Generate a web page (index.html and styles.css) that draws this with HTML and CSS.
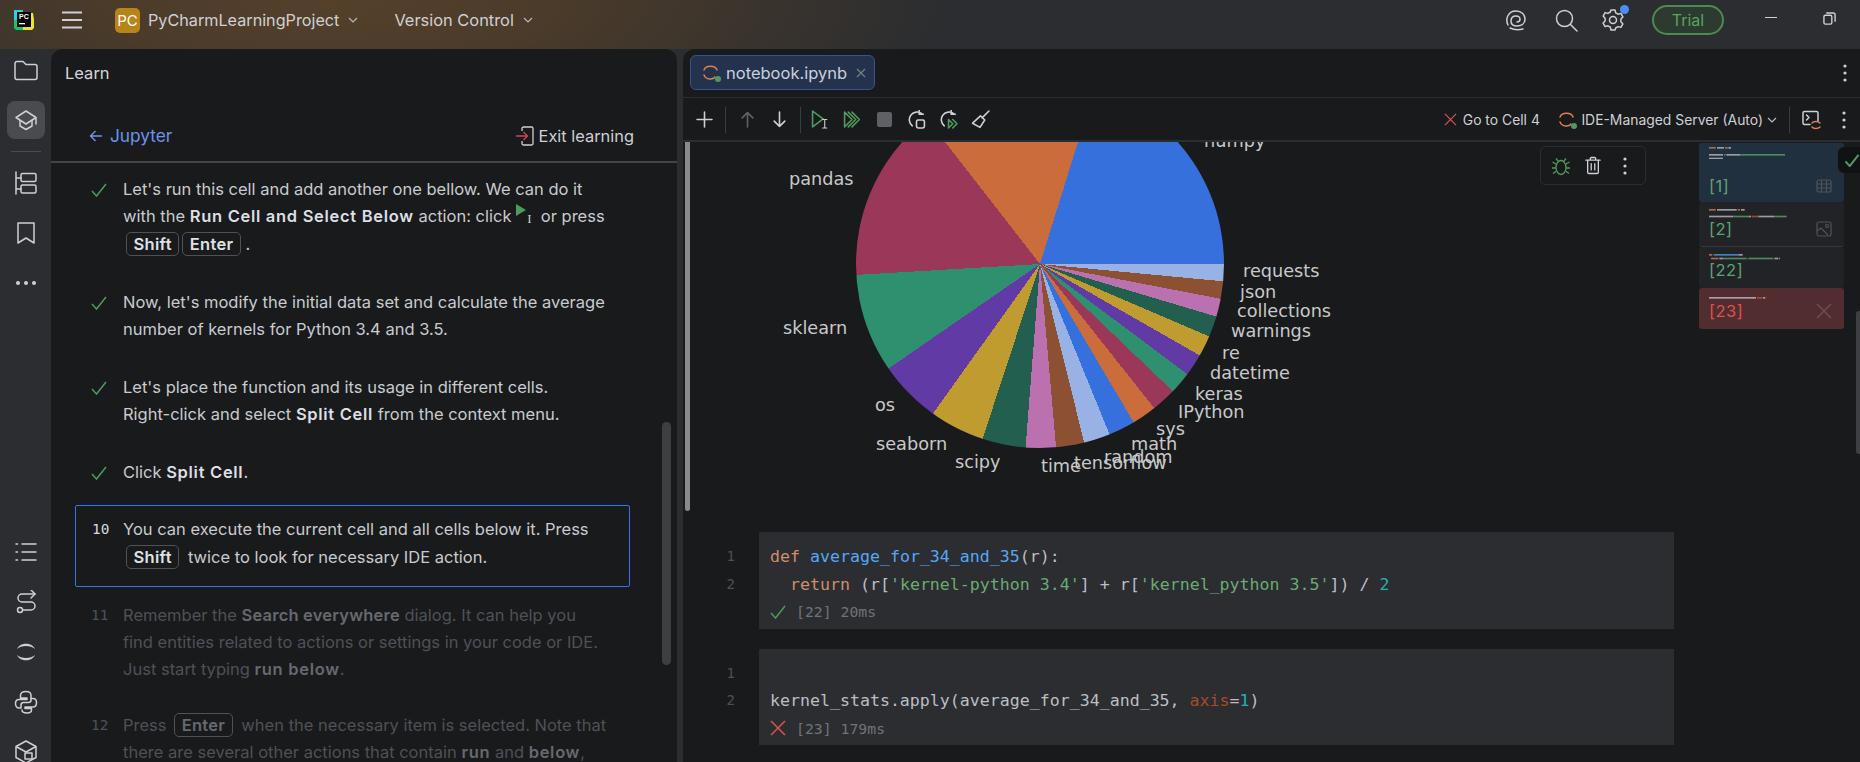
FILE: index.html
```html
<!DOCTYPE html>
<html lang="en">
<head>
<meta charset="utf-8">
<title>PyCharm Learn</title>
<link rel="stylesheet" href="styles.css">
</head>
<body>
<div class="app">
  <header class="titlebar">
    <svg class="logo" viewBox="0 0 20 20"><path d="M0 0h9v4H4v6H0z" fill="#21d7e0"/><path d="M0 10h4v6h5v4H2l-2-2z" fill="#18c36a"/><path d="M9 16h7v-6h4v8l-2 2H9z" fill="#e7e339"/><path d="M16 3h3l1 7h-4z" fill="#f5e62f"/><rect x="3" y="2" width="14" height="15" fill="#000"/><text x="5" y="9" class="logo-text">PC</text><rect x="5" y="13" width="6" height="1.3" fill="#fff"/></svg>
    <svg class="hamburger" viewBox="0 0 20 18"><path d="M0 1.5h20M0 9h20M0 16.5h20"/></svg>
    <span class="project-badge">PC</span>
    <span class="title-item">PyCharmLearningProject</span>
    <svg class="chev" viewBox="0 0 12 12"><path d="M2 4l4 4 4-4"/></svg>
    <span class="title-item vcs">Version Control</span>
    <svg class="chev" viewBox="0 0 12 12"><path d="M2 4l4 4 4-4"/></svg>
    <div class="title-right">
      <svg class="ico ai" viewBox="0 0 24 24"><path d="M4 17C1 11 4 3 12 3c6 0 9 4 9 8 0 5-4 7-8 7-4 0-6-2-6-5 0-3 2-5 5-5 3 0 4 2 4 3 0 2-1 3-3 3M6 20c4 2 9 2 13 1"/></svg>
      <svg class="ico search" viewBox="0 0 24 24"><circle cx="10.5" cy="10.5" r="8"/><path d="M16.5 16.5L23 23"/></svg>
      <span class="gear-wrap">
        <svg class="ico gear" viewBox="0 0 24 24"><path d="M10 2h4l.7 2.8 2.4 1.4 2.8-.8 2 3.5-2 2.1v2.8l2 2.1-2 3.5-2.8-.8-2.4 1.4L14 22h-4l-.7-2.8-2.4-1.4-2.8.8-2-3.5 2-2.1v-2.8l-2-2.1 2-3.5 2.8.8 2.4-1.4z"/><circle cx="12" cy="12" r="3.5"/></svg>
        <i class="gear-dot"></i>
      </span>
      <span class="trial">Trial</span>
      <i class="win-min"></i>
      <svg class="ico win-restore" viewBox="0 0 14 14"><rect x="1" y="3.5" width="8.5" height="9.5" rx="1.5"/><path d="M4 1h7a2 2 0 0 1 2 2v7"/></svg>
    </div>
  </header>

  <div class="workspace">
    <nav class="stripe">
      <div class="stripe-group">
        <span class="slot"><svg class="ico s-ico" viewBox="0 0 24 24"><path d="M1 5.5a2 2 0 0 1 2-2h6l3 3h9a2 2 0 0 1 2 2v11a2 2 0 0 1-2 2H3a2 2 0 0 1-2-2z"/></svg></span>
        <span class="slot active"><svg class="ico s-ico" viewBox="0 0 24 24"><path d="M12 3l10 6.5L12 16 2 9.500z"/><path d="M6 12.500v5.500l6 3.500 6-3.500v-5.500"/><path d="M22 10v6"/></svg></span>
        <i class="stripe-sep"></i>
        <span class="slot"><svg class="ico s-ico" viewBox="0 0 24 24"><path d="M2 1v22M2 7h5M2 18h5"/><rect x="7" y="2.500" width="15" height="8" rx="1.500"/><rect x="7" y="14" width="15" height="8" rx="1.500"/></svg></span>
        <span class="slot"><svg class="ico s-ico" viewBox="0 0 24 24"><path d="M4 2h16v20l-8-5-8 5z"/></svg></span>
        <span class="slot"><svg class="s-ico" viewBox="0 0 24 24"><circle cx="4" cy="12" r="2" class="dot"/><circle cx="12" cy="12" r="2" class="dot"/><circle cx="20" cy="12" r="2" class="dot"/></svg></span>
      </div>
      <div class="stripe-group bottom">
        <span class="slot"><svg class="ico s-ico" viewBox="0 0 24 24"><path d="M8 4h14M8 12h14M8 20h14M2 4h1.500M2 12h1.500M2 20h1.500"/></svg></span>
        <span class="slot"><svg class="ico s-ico" viewBox="0 0 24 24"><path d="M21 4H8a4 4 0 0 0 0 8h9a4 4 0 0 1 0 8H9"/><path d="M17 0l4 4-4 4"/><circle cx="6" cy="20" r="2.500"/></svg></span>
        <span class="slot"><svg class="s-ico" viewBox="0 0 24 24"><path class="dot" d="M3 9C6 2 18 2 21 9 17 5 7 5 3 9zM3 15c3 7 15 7 18 0-4 4-14 4-18 0z"/></svg></span>
        <span class="slot"><svg class="ico s-ico" viewBox="0 0 24 24"><path d="M12 1.500c-4 0-5.500 1.500-5.500 4V8H13v1.500H5C2.500 9.500 1.500 11 1.500 13.500S3 18 5 18h2v-3c0-1.500 1-2.500 2.500-2.500h5c1.500 0 2.500-1 2.500-2.500V5.500c0-2.500-1.500-4-5-4z"/><path d="M17 8.500h2c2.500 0 3.500 1.500 3.500 4s-1 4.500-3.500 4.500h-8v1.500h6.500V20c0 2.500-1.500 3-4.500 3s-5-1-5-3"/></svg></span>
        <span class="slot"><svg class="ico s-ico" viewBox="0 0 24 24"><path d="M12 1l10 5.500v11L12 23 2 17.500v-11zM2 6.500L12 12l10-5.500"/><path d="M11 13h7v6h-7z"/></svg></span>
      </div>
    </nav>

    <aside class="learn">
      <div class="learn-head">Learn</div>
      <div class="learn-nav">
        <svg class="back" viewBox="0 0 14 14"><path d="M13 7H1.500M6.500 2l-5 5 5 5"/></svg>
        <span class="jup">Jupyter</span>
        <svg class="exit" viewBox="0 0 18 20"><path class="exit-door" d="M6 5V2.500A1.500 1.500 0 0 1 7.500 1h8A1.500 1.500 0 0 1 17 2.500v15a1.500 1.500 0 0 1-1.500 1.500h-8A1.500 1.500 0 0 1 6 17.500V15"/><path class="exit-arrow" d="M0 10h11M7.500 6l4 4-4 4"/></svg>
        <span class="exit-label">Exit learning</span>
      </div>
      <ol class="steps">
        <li class="step">
          <svg class="check" viewBox="0 0 16 14"><path d="M1 8l4.500 5L15 1"/></svg>
          <p>Let's run this cell and add another one bellow. We can do it with the <b>Run Cell and Select Below</b> action: click <span class="inline-run"><i class="play"></i><i class="cursor">I</i></span> or press <kbd>Shift</kbd><kbd>Enter</kbd> .</p>
        </li>
        <li class="step">
          <svg class="check" viewBox="0 0 16 14"><path d="M1 8l4.500 5L15 1"/></svg>
          <p>Now, let's modify the initial data set and calculate the average number of kernels for Python 3.4 and 3.5.</p>
        </li>
        <li class="step">
          <svg class="check" viewBox="0 0 16 14"><path d="M1 8l4.500 5L15 1"/></svg>
          <p>Let's place the function and its usage in different cells.<br>Right-click and select <b>Split Cell</b> from the context menu.</p>
        </li>
        <li class="step last-done">
          <svg class="check" viewBox="0 0 16 14"><path d="M1 8l4.500 5L15 1"/></svg>
          <p>Click <b>Split Cell</b>.</p>
        </li>
        <li class="step current">
          <span class="num">10</span>
          <p>You can execute the current cell and all cells below it. Press <kbd>Shift</kbd> <span class="after-kbd">twice to look for necessary IDE action.</span></p>
        </li>
        <li class="step dim">
          <span class="num">11</span>
          <p>Remember the <b class="narrow">Search everywhere</b> dialog. It can help you<br>find entities related to actions or settings in your code or IDE.<br>Just start typing <b>run below</b>.</p>
        </li>
        <li class="step dim">
          <span class="num">12</span>
          <p>Press <kbd>Enter</kbd> <span class="after-kbd">when the necessary item is selected. Note that</span> there are several other actions that contain <b>run</b> and <b>below</b>,</p>
        </li>
      </ol>
      <i class="learn-scroll"></i>
    </aside>

    <main class="editor">
      <div class="tabs">
        <div class="tab">
          <svg class="jup-ico" viewBox="0 0 20 20"><path class="arc" d="M2 7C4 2 13 2 15 7M2 12c2 5 9 5 11 2"/><circle cx="16" cy="16" r="3" class="green"/></svg>
          <span>notebook.ipynb</span>
          <svg class="tab-x" viewBox="0 0 10 10"><path d="M1 1l8 8M9 1l-8 8"/></svg>
        </div>
        <svg class="vdots tabs-dots" viewBox="0 0 4 18"><circle cx="2" cy="2" r="1.600"/><circle cx="2" cy="9" r="1.600"/><circle cx="2" cy="16" r="1.600"/></svg>
      </div>
      <div class="toolbar">
        <span class="tool"><svg class="ico t-ico sm" viewBox="0 0 16 16"><path d="M8 1v14M1 8h14"/></svg></span>
        <i class="tool-sep"></i>
        <span class="tool"><svg class="ico t-ico sm off" viewBox="0 0 16 16"><path d="M8 15V1.500M3 6.500l5-5 5 5"/></svg></span>
        <span class="tool"><svg class="ico t-ico sm" viewBox="0 0 16 16"><path d="M8 1v13.500M3 9.500l5 5 5-5"/></svg></span>
        <i class="tool-sep tight"></i>
        <span class="tool"><svg class="ico t-ico g" viewBox="0 0 18 18"><path d="M1.500 1v15l10-7.500z"/><path class="wh" d="M13 9v8M11 9h4M11 17h4"/></svg></span>
        <span class="tool"><svg class="ico t-ico g" viewBox="0 0 18 18"><path d="M1.500 2v14l7-7zM8.500 2l7 7-7 7M5 2l7 7-7 7"/></svg></span>
        <span class="tool"><i class="stop"></i></span>
        <span class="tool"><svg class="ico t-ico" viewBox="0 0 18 18"><path d="M14 3.500A7 7 0 1 0 5 15M11.500 0v4h4"/><rect x="9" y="9.500" width="7.500" height="7.500" rx="1.500"/></svg></span>
        <span class="tool"><svg class="ico t-ico" viewBox="0 0 18 18"><path d="M14 3.500A7 7 0 1 0 5 15M11.500 0v4h4"/><path class="gs" d="M9 9l4 4-4 4zM13 9l4 4-4 4"/></svg></span>
        <span class="tool"><svg class="ico t-ico" viewBox="0 0 18 18"><path d="M17 1l-6.500 6.500M9 5.500l4 4-4.500 7-7-4z"/></svg></span>
        <div class="tool-right">
          <svg class="err-x" viewBox="0 0 14 14"><path d="M1 1l12 12M13 1L1 13"/></svg>
          <span class="goto">Go to Cell 4</span>
          <svg class="jup-ico srv" viewBox="0 0 20 20"><path class="arc" d="M2 7C4 2 13 2 15 7M2 12c2 5 9 5 11 2"/><circle cx="16" cy="16" r="3" class="green"/></svg>
          <span class="server">IDE-Managed Server (Auto)</span>
          <svg class="chev srv-chev" viewBox="0 0 12 12"><path d="M2 4l4 4 4-4"/></svg>
          <i class="tool-sep end"></i>
          <svg class="ico term" viewBox="0 0 20 20"><path d="M16 11V3a1.500 1.500 0 0 0-1.500-1.500H2.500A1.500 1.500 0 0 0 1 3v10a1.500 1.500 0 0 0 1.500 1.500H8M4.500 5l2.500 2.500L4.500 10"/><path class="arc" d="M10 13c1.500-2 6-2 8 0M10 17c1.500 2 6 2 8 0"/></svg>
          <svg class="vdots" viewBox="0 0 4 18"><circle cx="2" cy="2" r="1.600"/><circle cx="2" cy="9" r="1.600"/><circle cx="2" cy="16" r="1.600"/></svg>
        </div>
      </div>
      <div class="notebook">
        <i class="cell-strip"></i>
        <div class="nb-main">
          <figure class="chart">
            <div class="pie"></div>
            <span class="lbl l-numpy">numpy</span>
            <span class="lbl l-pandas">pandas</span>
            <span class="lbl l-sklearn">sklearn</span>
            <span class="lbl l-os">os</span>
            <span class="lbl l-seaborn">seaborn</span>
            <span class="lbl l-scipy">scipy</span>
            <span class="lbl l-time">time</span>
            <span class="lbl l-tensorflow">tensorflow</span>
            <span class="lbl l-random">random</span>
            <span class="lbl l-math">math</span>
            <span class="lbl l-sys">sys</span>
            <span class="lbl l-ipython">IPython</span>
            <span class="lbl l-keras">keras</span>
            <span class="lbl l-datetime">datetime</span>
            <span class="lbl l-re">re</span>
            <span class="lbl l-warnings">warnings</span>
            <span class="lbl l-collections">collections</span>
            <span class="lbl l-json">json</span>
            <span class="lbl l-requests">requests</span>
          </figure>
          <section class="cell-row first">
            <div class="gutter"><span>1</span><span>2</span></div>
            <div class="cell">
              <div class="code"><span class="kw">def</span> <span class="fn">average_for_34_and_35</span>(r):</div>
              <div class="code"><span class="kw">  return</span> (r[<span class="str">'kernel-python 3.4'</span>] + r[<span class="str">'kernel_python 3.5'</span>]) / <span class="n">2</span></div>
              <div class="status"><svg class="st-ico ok" viewBox="0 0 16 14"><path d="M1 8l4.500 5L15 1"/></svg>[22] 20ms</div>
            </div>
          </section>
          <section class="cell-row second">
            <div class="gutter"><span>1</span><span>2</span></div>
            <div class="cell">
              <div class="code">&nbsp;</div>
              <div class="code">kernel_stats.apply(average_for_34_and_35, <span class="arg">axis</span>=<span class="n">1</span>)</div>
              <div class="status"><svg class="st-ico bad" viewBox="0 0 16 16"><path d="M1 1l14 14M15 1L1 15"/></svg>[23] 179ms</div>
            </div>
          </section>
        </div>
        <div class="cell-actions">
          <svg class="bug" viewBox="0 0 20 20"><ellipse cx="10" cy="11.500" rx="5" ry="7"/><path d="M7 5L5 2.500M13 5l2-2.500M5 8L1.500 6M15 8l3.500-2M5 12H1M15 12h4M5.500 15L2 17.500M14.500 15l3.500 2.500"/></svg>
          <svg class="ico trash" viewBox="0 0 18 20"><path d="M1 4h16M6 4V2a1 1 0 0 1 1-1h4a1 1 0 0 1 1 1v2M3 4v13.500A1.500 1.500 0 0 0 4.500 19h9a1.500 1.500 0 0 0 1.500-1.500V4M7 8v7M11 8v7"/></svg>
          <svg class="vdots" viewBox="0 0 4 18"><circle cx="2" cy="2" r="1.600"/><circle cx="2" cy="9" r="1.600"/><circle cx="2" cy="16" r="1.600"/></svg>
        </div>
        <aside class="toc">
          <div class="toc-item t1">
            <svg class="mini" viewBox="87 0 330 48"><rect x="87" y="12" width="20" height="5" fill="#a86c4e"/><rect x="111" y="12" width="21" height="5" fill="#9b9da3"/><rect x="135" y="12" width="8" height="5" fill="#a86c4e"/><rect x="145" y="12" width="8" height="5" fill="#9b9da3"/><rect x="87" y="33" width="42" height="5" fill="#9b9da3"/><rect x="133" y="33" width="3" height="5" fill="#9b9da3"/><rect x="139" y="33" width="42" height="5" fill="#9b9da3"/><rect x="181" y="33" width="134" height="5" fill="#4f8a5a"/><rect x="87" y="44" width="42" height="4" fill="#9b9da3"/></svg>
            <div class="toc-foot"><span class="toc-lbl">[1]</span>
              <svg class="toc-ico" viewBox="0 0 16 14"><rect x="1" y="1" width="14" height="12" rx="2"/><path d="M1 5h14M1 9h14M5.500 1v12M10.500 1v12"/></svg></div>
          </div>
          <div class="toc-item t2">
            <svg class="mini" viewBox="87 0 330 48"><rect x="87" y="21" width="20" height="5" fill="#a86c4e"/><rect x="111" y="21" width="59" height="5" fill="#9b9da3"/><rect x="173" y="21" width="7" height="5" fill="#a86c4e"/><rect x="183" y="21" width="11" height="5" fill="#9b9da3"/><rect x="87" y="41" width="73" height="5" fill="#9b9da3"/><rect x="160" y="41" width="47" height="5" fill="#4f8a5a"/><rect x="207" y="41" width="6" height="5" fill="#9b9da3"/><rect x="215" y="41" width="20" height="5" fill="#a5462e"/><rect x="235" y="41" width="47" height="5" fill="#9b9da3"/><rect x="282" y="41" width="38" height="5" fill="#4f8a5a"/></svg>
            <div class="toc-foot"><span class="toc-lbl">[2]</span>
              <svg class="toc-ico img" viewBox="0 0 16 16"><rect x="1" y="1" width="14" height="14" rx="2"/><circle cx="11" cy="5" r="1.500"/><path d="M1 10l4-3 7 7"/></svg></div>
          </div>
          <div class="toc-item t3">
            <svg class="mini" viewBox="87 0 330 48"><rect x="87" y="21" width="10" height="5" fill="#a86c4e"/><rect x="101" y="21" width="74" height="5" fill="#3d85c6"/><rect x="175" y="21" width="13" height="5" fill="#9b9da3"/><rect x="93" y="32" width="22" height="5" fill="#a86c4e"/><rect x="118" y="32" width="12" height="5" fill="#9b9da3"/><rect x="130" y="32" width="70" height="5" fill="#4f8a5a"/><rect x="203" y="32" width="2" height="5" fill="#9b9da3"/><rect x="207" y="32" width="73" height="5" fill="#4f8a5a"/><rect x="283" y="32" width="12" height="5" fill="#9b9da3"/><rect x="297" y="32" width="3" height="5" fill="#2aacb8"/></svg>
            <div class="toc-foot"><span class="toc-lbl">[22]</span></div>
          </div>
          <div class="toc-item t4">
            <svg class="mini" viewBox="87 0 330 48"><rect x="87" y="27" width="141" height="5" fill="#a8a2a2"/><rect x="231" y="27" width="16" height="5" fill="#b0482c"/><rect x="249" y="27" width="7" height="5" fill="#7fa4b0"/></svg>
            <div class="toc-foot"><span class="toc-lbl red">[23]</span>
              <svg class="toc-ico x" viewBox="0 0 16 16"><path d="M1 1l14 14M15 1L1 15"/></svg></div>
          </div>
        </aside>
        <div class="toc-check"><svg viewBox="0 0 16 14"><path d="M1 8l4.500 5L15 1"/></svg></div>
        <i class="nb-scroll"></i>
      </div>
    </main>
  </div>
</div>
</body>
</html>
```

FILE: styles.css
```css
* { box-sizing: border-box; }
html, body { margin: 0; height: 100%; overflow: hidden; }
body { background: #2b2d30; font-family: Inter, "Liberation Sans", sans-serif; color: #c9ccd1; }
.app { width: 1860px; height: 762px; display: flex; flex-direction: column; overflow: hidden; }
i { display: block; font-style: normal; }
svg { display: block; flex: none; }

.ico { fill: none; stroke: #ced0d6; stroke-width: 1.5; stroke-linecap: round; stroke-linejoin: round; }
.dot { fill: #ced0d6; }

/* title bar */
.titlebar {
  height: 49px; flex: none; display: flex; align-items: center;
  background: radial-gradient(ellipse 620px 190px at 330px 0, #55412a 0, #4b3b2a 35%, #2b2d30 100%);
  background-color: #2b2d30;
}
.logo { width: 20px; height: 20px; margin: -9px 0 0 14px; }
.logo-text { font: 700 7px "Liberation Sans", sans-serif; fill: #fff; }
.hamburger { width: 20px; height: 18px; margin: -9px 0 0 28px; fill: none; stroke: #ced0d6; stroke-width: 2; }
.project-badge {
  width: 25px; height: 25px; margin: -8px 0 0 33px; border-radius: 5px; background: #b8841a; color: #fff;
  font-size: 15px; display: flex; align-items: center; justify-content: center;
}
.title-item { font-size: 16.2px; margin: -10px 0 0 8px; color: #cfd1d6; white-space: nowrap; }
.title-item.vcs { margin-left: 35px; font-size: 16.4px; }
.chev { width: 12px; height: 12px; margin: -10px 0 0 8px; fill: none; stroke: #b4b8bf; stroke-width: 1.2; }
.title-right { margin-left: auto; display: flex; align-items: center; height: 100%; padding-bottom: 10px; }
.ai { width: 24px; height: 24px; margin-right: 26px; }
.search { width: 24px; height: 24px; margin-right: 23px; }
.gear-wrap { position: relative; display: block; margin-right: 27px; }
.gear { width: 24px; height: 24px; }
.gear-dot { position: absolute; width: 9px; height: 9px; border-radius: 50%; background: #4d8df6; right: -4px; top: -3px; }
.trial {
  width: 72px; height: 30px; border: 2px solid #4b8a52; border-radius: 15px; background: #2c3a30; color: #57a55f;
  font-size: 16px; display: flex; align-items: center; justify-content: center;
}
.win-min { width: 12px; height: 1.500px; background: #ced0d6; margin: -4px 0 0 41px; }
.win-restore { width: 13px; height: 13px; margin: -2px 24px 0 46px; }

/* workspace */
.workspace { flex: 1; display: flex; min-height: 0; }
.stripe { width: 51px; flex: none; display: flex; flex-direction: column; padding-top: 2px; }
.stripe-group { display: flex; flex-direction: column; gap: 12px; align-items: center; }
.stripe-group.bottom { margin-top: 231px; }
.slot { width: 38px; height: 38px; border-radius: 8px; display: flex; align-items: center; justify-content: center; flex: none; }
.slot.active { background: #4a4b4e; }
.s-ico { width: 24px; height: 24px; }
.stripe-sep { width: 30px; height: 1px; background: #4a4c50; }

/* learn */
.learn { width: 626px; flex: none; background: #191a1c; border-radius: 12px 12px 0 0; position: relative; overflow: hidden; }
.learn-head { height: 48px; display: flex; align-items: center; padding-left: 14px; font-size: 16.5px; color: #d4d6da; }
.learn-nav { height: 66px; padding: 24px 0 0 38px; display: flex; align-items: flex-start; border-bottom: 2px solid #43454a; }
.back { width: 14px; height: 14px; margin-top: 8px; fill: none; stroke: #6c95e8; stroke-width: 1.4; }
.jup { color: #6c95e8; font-size: 17.300px; margin-left: 7px; line-height: 30px; }
.exit { width: 18px; height: 20px; margin: 5px 0 0 auto; fill: none; stroke-width: 1.3; }
.exit-door { stroke: #ced0d6; }
.exit-arrow { stroke: #c9494d; }
.exit-label { font-size: 16.400px; margin: 0 43px 0 5px; line-height: 31px; color: #ced0d6; }

.steps { list-style: none; margin: 0; padding: 13px 0 0 24px; width: 579px; }
.step { display: flex; padding: 0 20px 0 16px; margin-bottom: 30.500px; position: relative; font-size: 16.500px; line-height: 27.400px; color: #c8cbcf; }
.step p { margin: 0; padding-left: 32px; }
.step b { font-weight: 600; color: #dcdfe3; letter-spacing: .7px; }
.step b.narrow { letter-spacing: .2px; }
.step.last-done { margin-bottom: 18px; }
.check { position: absolute; left: 16px; top: 7px; width: 16px; height: 14px; fill: none; stroke: #4f9a5d; stroke-width: 1.500; }
.num { position: absolute; left: 16px; top: 0; font-family: "DejaVu Sans Mono", monospace; font-size: 14.400px; color: #d8dade; }
.current { border: 1.500px solid #3574f0; border-radius: 2px; padding-top: 10.500px; padding-bottom: 14.500px; margin-bottom: 15px; }
.current .num { top: 10.500px; }
.current p { padding-left: 31px; }
.step.dim { margin-bottom: 28px; }
.dim { color: #4e5157; }
.dim b { color: #66696f; }
.dim .num { color: #4e5157; }
kbd {
  display: inline-block; font: 600 16.500px/22px Inter, sans-serif; letter-spacing: .3px; color: #dfe1e5;
  border: 1px solid #4f5157; border-radius: 5px; padding: 0 6.500px; margin: 0 0 0 3px;
}
.dim kbd { color: #66696f; }
.after-kbd { margin-left: 4px; }
.inline-run { display: inline-block; position: relative; width: 20px; height: 16px; vertical-align: -1px; }
.play { position: absolute; left: 0; top: -3px; width: 0; height: 0; border-left: 10px solid #4f9a5d; border-top: 6px solid transparent; border-bottom: 6px solid transparent; }
.cursor { position: absolute; left: 11px; top: 6px; font: 13px/12px "Liberation Serif", serif; color: #ced0d6; }
.learn-scroll { position: absolute; left: 611px; top: 373px; width: 9px; height: 243px; border-radius: 5px; background: #3d3f43; }

/* editor */
.editor { flex: 1; min-width: 0; margin-left: 6px; background: #191a1c; border-radius: 12px 0 0 0; display: flex; flex-direction: column; overflow: hidden; }
.tabs { height: 49px; flex: none; border-bottom: 1px solid #2b2d30; display: flex; align-items: center; padding: 0 13px 1px 7px; justify-content: space-between; }
.tab { width: 185px; height: 35px; background: #25324d; border: 1px solid #35538f; border-radius: 6px; display: flex; align-items: center; padding-left: 11px; font-size: 16.500px; color: #c9cfdc; }
.jup-ico { width: 20px; height: 20px; margin-right: 4px; }
.arc { fill: none; stroke: #e0814a; stroke-width: 1.500; stroke-linecap: round; }
.green { fill: #4f9a5d; }
.tab-x { width: 10px; height: 10px; margin-left: 9px; fill: none; stroke: #7a7e85; stroke-width: 1.200; }
.vdots { width: 4px; height: 18px; fill: #ced0d6; }

.toolbar { height: 44px; flex: none; border-bottom: 2px solid #2b2d30; display: flex; align-items: center; padding: 1px 0 0 5px; }
.tool { width: 32px; height: 32px; display: flex; align-items: center; justify-content: center; flex: none; }
.tool-sep { width: 1px; height: 26px; background: #3a3c40; margin: 0 5px; flex: none; }
.tool-sep.tight { margin-right: 3px; }
.t-ico { width: 19px; height: 19px; }
.t-ico.sm { width: 17px; height: 17px; }
.t-ico.off { stroke: #5f6267; }
.t-ico.g { stroke: #4f9a5d; }
.wh { stroke: #ced0d6; stroke-width: 1; }
.gs { stroke: #4f9a5d; }
.stop { width: 15px; height: 15px; background: #5f6165; border-radius: 2px; }
.tool-right { margin-left: auto; display: flex; align-items: center; font-size: 13.900px; color: #ced0d6; padding-right: 14px; }
.err-x { width: 13px; height: 13px; fill: none; stroke: #d9534f; stroke-width: 1.300; }
.goto { margin-left: 6px; white-space: nowrap; }
.srv { margin: 0 3px 0 18.500px; }
.server { white-space: nowrap; }
.srv-chev { margin: 0 0 0 3px; }
.tool-sep.end { margin: 0 12px 0 11px; }
.term { width: 20px; height: 20px; margin-right: 20px; }

.notebook { flex: 1; min-height: 0; display: flex; position: relative; overflow: hidden; }
.cell-strip { position: absolute; left: 2px; top: 0; width: 5px; height: 369px; background: #8a8a8a; border-radius: 0 0 3px 3px; }
.nb-main { width: 991px; flex: none; }
.chart { margin: -62px 0 0 76px; width: 915px; height: 452px; position: relative; }
.pie {
  position: absolute; left: 97px; top: 0; width: 368px; height: 368px; border-radius: 50%;
  background: conic-gradient(from 0deg,
    #cb6c3b 0 17.3deg, #3570dc 17.3deg 90deg, #98b2e6 90deg 95.4deg, #8c5032 95.4deg 100.9deg, #bb70b0 100.9deg 106.6deg,
    #235f4e 106.6deg 113.2deg, #c09b30 113.2deg 119.8deg, #623aa6 119.8deg 126.8deg, #2f9070 126.8deg 133.8deg,
    #9b3759 133.8deg 141.6deg, #cb6c3b 141.6deg 149.4deg, #3570dc 149.4deg 157.8deg, #98b2e6 157.8deg 166.1deg,
    #8c5032 166.1deg 175deg, #bb70b0 175deg 184.5deg, #235f4e 184.5deg 198.2deg, #c09b30 198.2deg 215.6deg,
    #623aa6 215.6deg 235.4deg, #2f9070 235.4deg 266.6deg, #9b3759 266.6deg 322.1deg, #cb6c3b 322.1deg 360deg);
}
.lbl { position: absolute; font: 17.700px/20px "DejaVu Sans", sans-serif; color: #c8c9ca; white-space: nowrap; }
.l-numpy { left: 445px; top: 51px; }
.l-pandas { left: 30px; top: 89px; }
.l-sklearn { left: 24px; top: 238px; }
.l-os { left: 116px; top: 315px; }
.l-seaborn { left: 117px; top: 354px; }
.l-scipy { left: 196px; top: 372px; }
.l-time { left: 282px; top: 376px; }
.l-tensorflow { left: 315px; top: 373px; }
.l-random { left: 345px; top: 367px; }
.l-math { left: 372px; top: 354px; }
.l-sys { left: 397px; top: 339px; }
.l-ipython { left: 419px; top: 322px; }
.l-keras { left: 436px; top: 304px; }
.l-datetime { left: 451px; top: 283px; }
.l-re { left: 463px; top: 263px; }
.l-warnings { left: 472px; top: 241px; }
.l-collections { left: 478px; top: 221px; }
.l-json { left: 481px; top: 202px; }
.l-requests { left: 484px; top: 181px; }

.cell-row { display: flex; margin-bottom: 20px; }
.gutter { width: 76px; flex: none; display: flex; flex-direction: column; text-align: right; padding-right: 24px; font: 14px/27.500px "DejaVu Sans Mono", monospace; color: #4b5059; }
.cell-row.first .gutter { padding-top: 11px; }
.cell-row.second .gutter { padding-top: 10.500px; }
.cell { width: 915px; height: 97px; background: #2b2d30; padding-left: 11px; }
.cell-row.first .cell { padding-top: 11px; }
.cell-row.second .cell { padding-top: 10.500px; height: 96px; }
.code { font: 16.600px/27.500px "DejaVu Sans Mono", monospace; color: #bcbec4; white-space: pre; }
.kw { color: #cf8e6d; }
.fn { color: #56a8f5; }
.str { color: #6aab73; }
.n { color: #2aacb8; }
.arg { color: #aa4926; }
.status { font: 14.800px/27.500px "DejaVu Sans Mono", monospace; color: #6f737a; display: flex; align-items: center; }
.st-ico { width: 16px; height: 14px; margin-right: 10px; fill: none; stroke-width: 1.500; }
.st-ico.ok { stroke: #4f9a5d; }
.st-ico.bad { stroke: #d9534f; height: 16px; }

.cell-actions { position: absolute; left: 857px; top: 4px; width: 106px; height: 39px; border: 1px solid #2b2d30; border-radius: 5px; display: flex; align-items: center; gap: 14px; padding-left: 10px; }
.bug { width: 20px; height: 20px; fill: none; stroke: #4f9a5d; stroke-width: 1.300; }
.trash { width: 16px; height: 19px; }
.cell-actions .vdots { margin-left: 8px; }

.toc { width: 145px; margin: 1px 0 0 25px; flex: none; display: flex; flex-direction: column; }
.toc-item { position: relative; border-radius: 3px; background: #222326; padding-left: 10px; display: flex; flex-direction: column; flex: none; }
.t1 { height: 59px; background: #21303f; }
.t2 { height: 45px; border-bottom: 1px solid #36383c; }
.t3 { height: 41px; }
.t4 { height: 41px; background: #512d2f; }
.mini { width: 110px; height: 16px; flex: none; }
.toc-foot { display: flex; justify-content: space-between; align-items: center; padding-right: 12px; height: 20px; flex: none; }
.t1 .toc-foot { margin-top: 17px; }
.t2 .toc-foot { margin-top: 1px; }
.t3 .toc-foot, .t4 .toc-foot { margin-top: -3px; }
.toc-lbl { font-size: 16.500px; color: #5aa574; letter-spacing: .5px; }
.toc-lbl.red { color: #d9534f; }
.toc-ico { width: 16px; height: 14px; fill: none; stroke: #50535a; stroke-width: 1.200; }
.toc-ico.img { height: 16px; }
.toc-ico.x { height: 16px; stroke: #6e5156; }
.toc-check { position: absolute; right: 0; top: 5px; width: 22px; height: 26px; background: #111214; border-radius: 6px 0 0 6px; padding: 7px 0 0 6px; }
.toc-check svg { width: 16px; height: 13px; fill: none; stroke: #4f9a5d; stroke-width: 2.200; }
.nb-scroll { position: absolute; right: 0; top: 169px; width: 4px; height: 143px; background: #3d3f43; border-radius: 3px 0 0 3px; }
```
